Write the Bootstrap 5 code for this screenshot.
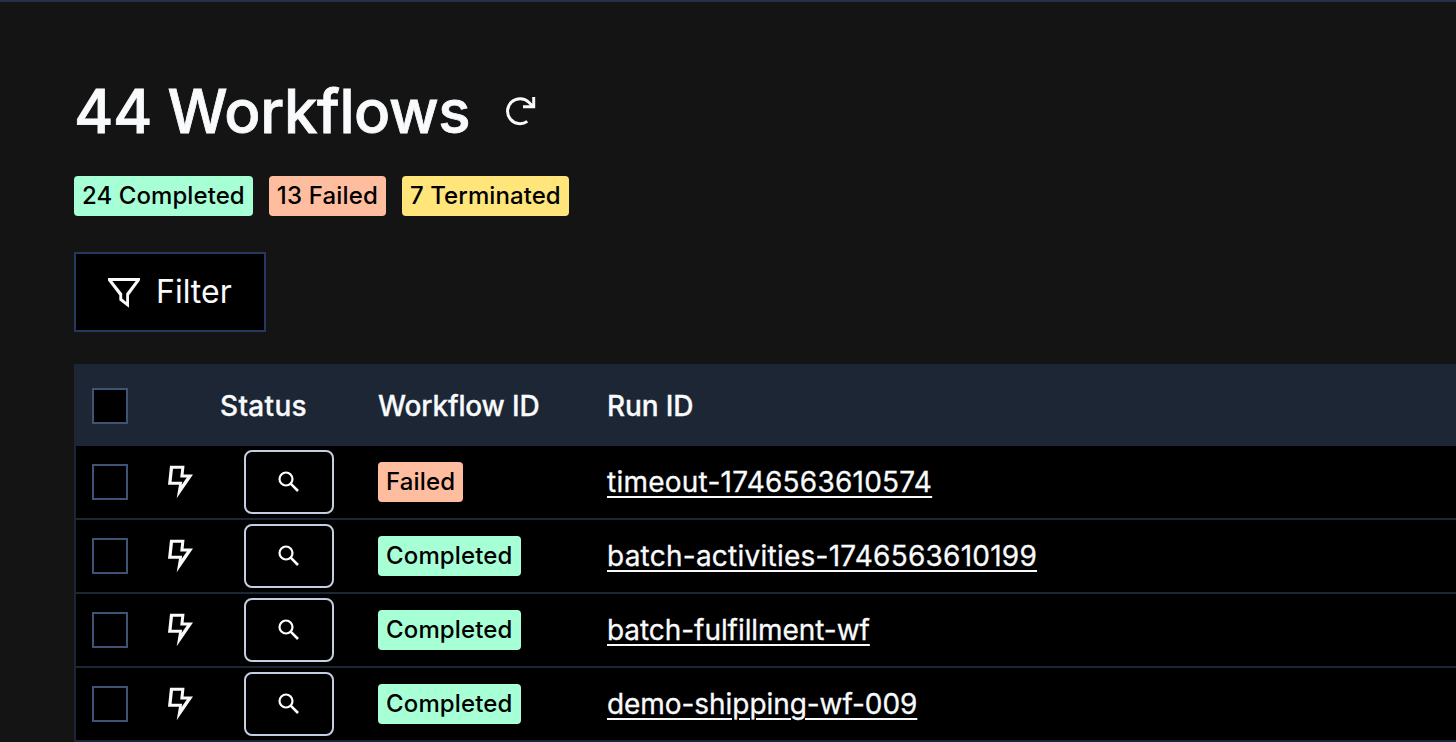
<!DOCTYPE html>
<html lang="en" data-bs-theme="dark">
<head>
<meta charset="utf-8">
<meta name="viewport" content="width=device-width, initial-scale=1">
<title>Workflows</title>
<link href="https://cdn.jsdelivr.net/npm/bootstrap@5.3.0/dist/css/bootstrap.min.css" rel="stylesheet">
<style>
  body { background: #141414; color: #f8fafc; font-family: Inter, "Liberation Sans", sans-serif; height: 742px; }
  svg { display: block; flex: none; }
  .top-rule { height: 2px; background: #26304a; }
  .page { padding: 75px 0 0 74px; }
  .page-title { width: 396px; font-size: 60px; font-weight: 500; line-height: 68px; letter-spacing: -.4px; white-space: nowrap; color: #f8fafc; -webkit-text-stroke: .8px #f8fafc; }
  .refresh { margin-left: 34px; color: inherit; }
  .status-chip { display: block; width: fit-content; height: 40px; padding: 0 8px; border-radius: 4px; font-size: 24px; line-height: 40px; font-weight: 500; letter-spacing: .14px; color: #000; white-space: nowrap; }
  .chips .status-chip { letter-spacing: .08px; }
  .chips .is-failed { letter-spacing: .16px; }
  .is-completed { background: #a7ffd6; }
  .is-failed { background: #ffbd9f; }
  .is-terminated { background: #ffe57a; }
  .chips { margin-top: 31px; }
  .filter-btn { --bs-btn-border-radius: 0; margin-top: 36px; width: 192px; height: 80px; padding: 0 0 0 32px; border: 2px solid #273860; background: #000; color: #f8fafc; font-size: 32px; line-height: 1; gap: 16px; }
  .runs { margin-top: 32px; border-left: 2px solid #1c2635; background: #000; }
  .run-table { width: 100%; table-layout: fixed; border-collapse: separate; border-spacing: 0; font-size: 28px; }
  .run-table th { height: 82px; padding: 2px 8px 0; background: #1d2635; font-weight: 500; white-space: nowrap; -webkit-text-stroke: .3px #f8fafc; }
  .th-status { letter-spacing: .3px; }
  .th-id { letter-spacing: -.15px; }
  .run-table td { height: 74px; padding: 0 8px; border-bottom: 2px solid #1d2635; white-space: nowrap; vertical-align: middle; }
  .run-table .pick { padding-left: 16px; }
  .check { appearance: none; display: block; margin: 0; width: 36px; height: 36px; border: 2px solid #3f5374; background: #000; }
  .look-btn { --bs-btn-border-radius: 8px; margin-left: 24px; width: 90px; height: 64px; padding: 0; border: 2px solid #c3cfe0; color: #fff; }
  .run-link { color: #f8fafc; text-underline-offset: 4px; text-decoration-thickness: 2px; letter-spacing: -.06px; -webkit-text-stroke: .3px #f8fafc; }
  .run-link.numbered { letter-spacing: .24px; }
</style>
</head>
<body class="overflow-hidden">
<svg width="0" height="0" class="position-absolute" aria-hidden="true">
  <symbol id="bolt" viewBox="0 0 26 34"><path fill="currentColor" fill-rule="evenodd" d="M2 .7H16.500L15.600 9.500H25L8.700 33.200L11 19.700H0ZM5 3.700H13.200L12.200 12.500H18.800L13.600 20L14.200 16.700H3.600Z"/></symbol>
  <symbol id="look" viewBox="0 0 22 22"><circle cx="8" cy="8" r="6.500" fill="none" stroke="currentColor" stroke-width="2.200"/><path d="M12.700 12.700l7.300 7.300" fill="none" stroke="currentColor" stroke-width="2.600"/></symbol>
</svg>
<div class="top-rule"></div>
<main class="page">
  <div class="d-flex align-items-center">
    <h1 class="page-title mb-0">44 Workflows</h1>
    <button class="refresh btn p-0 border-0" aria-label="Refresh"><svg width="32" height="32" viewBox="0 0 32 32" fill="none" stroke="currentColor" stroke-width="3"><path d="M23.300 26.400A12.500 12.500 0 1 1 24.800 7.300L28.500 11"/><path d="M29.700 2V11.800H19"/></svg></button>
  </div>
  <div class="chips d-flex gap-3">
    <span class="status-chip is-completed">24 Completed</span>
    <span class="status-chip is-failed">13 Failed</span>
    <span class="status-chip is-terminated">7 Terminated</span>
  </div>
  <button class="filter-btn btn d-flex align-items-center">
    <svg width="32" height="32" viewBox="0 0 32 32"><path fill="currentColor" fill-rule="evenodd" d="M0 2H32V4.200L21 19.300V31.700L11.300 24.300V19.300L0 4.500ZM4.300 5L14.200 17.500V22.500L18.200 26V17.500L27.700 5Z"/></svg>
    <span>Filter</span>
  </button>
  <div class="runs">
    <table class="run-table">
      <colgroup><col style="width:68px"><col style="width:68px"><col style="width:158px"><col style="width:229px"><col></colgroup>
      <thead><tr><th class="pick"><input type="checkbox" class="check"></th><th></th><th class="th-status">Status</th><th class="th-id">Workflow ID</th><th class="th-id">Run ID</th></tr></thead>
      <tbody>
        <tr><td class="pick"><input type="checkbox" class="check"></td><td class="bolt-cell ps-4"><svg width="26" height="34"><use href="#bolt"/></svg></td><td><button class="look-btn btn d-flex align-items-center justify-content-center"><svg width="22" height="22"><use href="#look"/></svg></button></td><td><span class="status-chip is-failed">Failed</span></td><td><a class="run-link numbered" href="#">timeout-1746563610574</a></td></tr>
        <tr><td class="pick"><input type="checkbox" class="check"></td><td class="bolt-cell ps-4"><svg width="26" height="34"><use href="#bolt"/></svg></td><td><button class="look-btn btn d-flex align-items-center justify-content-center"><svg width="22" height="22"><use href="#look"/></svg></button></td><td><span class="status-chip is-completed">Completed</span></td><td><a class="run-link numbered" href="#">batch-activities-1746563610199</a></td></tr>
        <tr><td class="pick"><input type="checkbox" class="check"></td><td class="bolt-cell ps-4"><svg width="26" height="34"><use href="#bolt"/></svg></td><td><button class="look-btn btn d-flex align-items-center justify-content-center"><svg width="22" height="22"><use href="#look"/></svg></button></td><td><span class="status-chip is-completed">Completed</span></td><td><a class="run-link" href="#">batch-fulfillment-wf</a></td></tr>
        <tr><td class="pick"><input type="checkbox" class="check"></td><td class="bolt-cell ps-4"><svg width="26" height="34"><use href="#bolt"/></svg></td><td><button class="look-btn btn d-flex align-items-center justify-content-center"><svg width="22" height="22"><use href="#look"/></svg></button></td><td><span class="status-chip is-completed">Completed</span></td><td><a class="run-link" href="#">demo-shipping-wf-009</a></td></tr>
      </tbody>
    </table>
  </div>
</main>
<script src="https://cdn.jsdelivr.net/npm/bootstrap@5.3.0/dist/js/bootstrap.bundle.min.js"></script>
</body>
</html>
